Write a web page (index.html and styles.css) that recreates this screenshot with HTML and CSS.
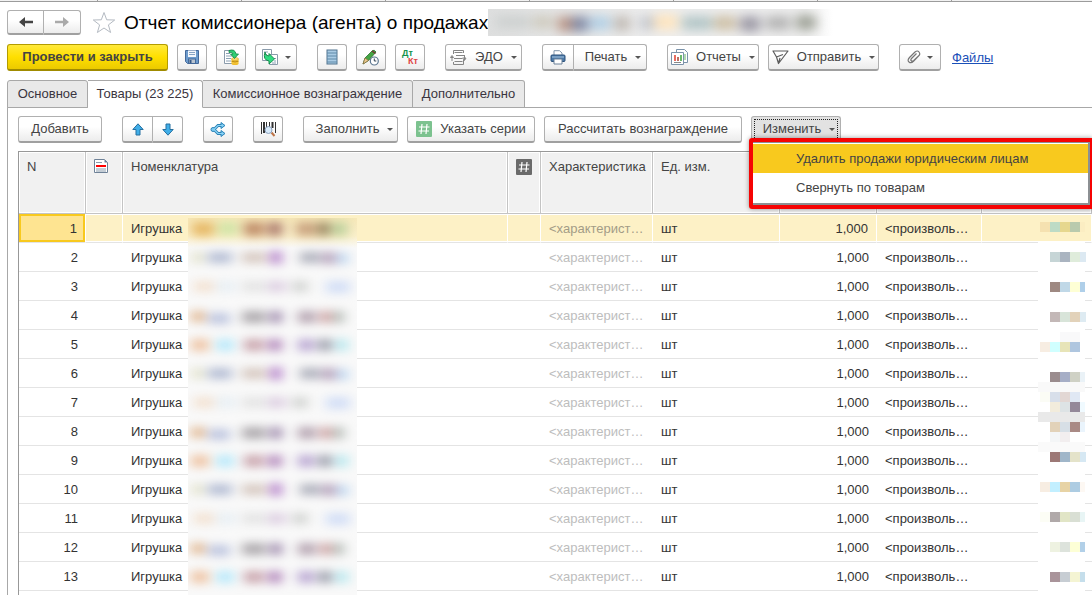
FILE: index.html
```html
<!DOCTYPE html>
<html lang="ru">
<head>
<meta charset="utf-8">
<meta name="viewport" content="width=device-width, initial-scale=1">
<title>Отчет комиссионера (агента) о продажах</title>
<link rel="stylesheet" href="styles.css">
</head>
<body>
<div class="window-tabs"><i></i><i></i><i></i><i></i><i></i><i></i><i></i></div>

<header class="title-row">
  <div class="group">
    <button class="btn nav" aria-label="Назад"><svg width="16" height="12" viewBox="0 0 16 12"><path d="M1 6L7 1v3.700h8v2.600H7V11z" fill="#444"/></svg></button><button class="btn nav" aria-label="Вперед"><svg width="16" height="12" viewBox="0 0 16 12"><path d="M15 6L9 1v3.700H1v2.600h8V11z" fill="#aaa"/></svg></button>
  </div>
  <svg class="star" width="24" height="23" viewBox="0 0 24 23"><path d="M12 1.500l2.700 7.300 8 .2-6.300 4.900 2.200 7.600L12 17l-6.600 4.500 2.200-7.600L1.300 9l8-.2z" fill="#fff" stroke="#b4bac2"/></svg>
  <h1>Отчет комиссионера (агента) о продажах</h1>
  <svg class="title-smear" width="345" height="27" viewBox="0 0 345 27" aria-hidden="true">
    <defs>
      <linearGradient id="fade" x1="0" x2="1"><stop offset="0" stop-color="#dedfdf"/><stop offset=".5" stop-color="#eee"/><stop offset=".92" stop-color="#eee"/><stop offset="1" stop-color="#fff"/></linearGradient>
      <filter id="soft" x="-10%" y="-100%" width="120%" height="300%" color-interpolation-filters="sRGB"><feGaussianBlur stdDeviation="6"/></filter>
    </defs>
    <rect width="345" height="27" fill="url(#fade)"/>
    <g filter="url(#soft)">
      <rect x="8" y="8" width="34" height="10" fill="#c8cccb"/><rect x="45" y="8" width="20" height="10" fill="#c9c4b4"/><rect x="70" y="8" width="14" height="14" fill="#b58d7c"/><rect x="84" y="8" width="16" height="14" fill="#77819f"/><rect x="102" y="8" width="20" height="12" fill="#a9cbe4"/><rect x="126" y="8" width="16" height="13" fill="#bbb4ad"/><rect x="152" y="8" width="14" height="12" fill="#bcc0c8"/><rect x="166" y="6" width="24" height="14" fill="#ffe4bb"/><rect x="194" y="8" width="30" height="12" fill="#a9bfc0"/><rect x="226" y="8" width="22" height="12" fill="#c8b89a"/><rect x="252" y="8" width="20" height="14" fill="#94919e"/><rect x="278" y="8" width="24" height="12" fill="#aaa"/><rect x="308" y="7" width="20" height="13" fill="#95998d"/>
    </g>
  </svg>
</header>

<div class="toolbar main-tools">
  <button class="btn primary">Провести и закрыть</button>
  <button class="btn icon" aria-label="Записать"><svg width="16" height="16" viewBox="0 0 16 16"><path d="M1.500 1.500h13v13h-11l-2-2z" fill="#6e9ccd" stroke="#44699a"/><rect x="4" y="1.500" width="8" height="6.500" fill="#f5f8fc"/><path d="M5 3.500h6M5 5.500h6" stroke="#89a5c5"/><rect x="4.500" y="10" width="7" height="4.500" fill="#b9c4d0" stroke="#44699a"/><rect x="5.500" y="11" width="2" height="3" fill="#365885"/></svg></button>
  <button class="btn icon" aria-label="Провести"><svg width="17" height="17" viewBox="0 0 17 17"><path d="M1.500 1.500h9v13h-9z" fill="#fff" stroke="#8a9bab"/><path d="M3 4.500h4M3 7h6M3 9.500h5M3 12h5" stroke="#8ba0b4"/><ellipse cx="12" cy="14.500" rx="3.500" ry="1.500" fill="#f0bc2c"/><path d="M8.500 10h7v4.500h-7z" fill="#f6c83c"/><path d="M8.500 12.200q3.500 1.500 7 0" stroke="#bb8a12" fill="none"/><ellipse cx="12" cy="10" rx="3.500" ry="1.400" fill="#ffe27a" stroke="#cf9c20" stroke-width=".6"/><path d="M6 1.500q6-2 7 3.500h2.500l-4 4.500-4-4.500H10Q9.500 2.500 6 3.500z" fill="#2fce72" stroke="#118545" stroke-width=".8"/></svg></button>
  <button class="btn icon drop" aria-label="Создать на основании"><svg width="18" height="17" viewBox="0 0 18 17"><path d="M1.500.5h9v11h-9z" fill="#fff" stroke="#8a9bab"/><path d="M3 3h4M3 5.500h3M3 8h2" stroke="#8ba0b4"/><path d="M8.500 5.500h8v10h-8z" fill="#fff" stroke="#8a9bab"/><path d="M13 9.500h2M13 12h2M11 14h4" stroke="#8ba0b4"/><path d="M4 3q0 4 4 4V4.500l5.500 5.500L8 15v-3Q1.500 11 4 3z" fill="#2fdb80" stroke="#118545" stroke-width=".9"/></svg><b class="caret"></b></button>
  <span class="sep"></span>
  <button class="btn icon" aria-label="Список"><svg width="12" height="16" viewBox="0 0 12 16"><rect x="1" y="1" width="10" height="14" fill="#a9cbe4" stroke="#52748f"/><path d="M1 4h10M1 7h10M1 10h10M1 13h10" stroke="#5e89a8"/></svg></button>
  <button class="btn icon" aria-label="Отложенное проведение"><svg width="18" height="17" viewBox="0 0 18 17"><path d="M1 15l2-6L10.500 1.500q2-1 3.500 1.500L6.500 11.500z" fill="#46a544" stroke="#2b7030" stroke-width=".8"/><path d="M1 15l2-6 3.500 2.500z" fill="#ecc88f" stroke="#8a6a3c" stroke-width=".7"/><path d="M10 2l3.500 2.500" stroke="#733" stroke-width="1.500"/><circle cx="12.300" cy="12" r="4" fill="#fff" stroke="#5b7690" stroke-width="1.200"/><path d="M12.300 9.500V12h2" stroke="#345" fill="none"/></svg></button>
  <button class="btn icon dtkt" aria-label="Дт Кт"><span class="dt">Дт</span><span class="kt">Кт</span></button>
  <span class="sep"></span>
  <button class="btn w-edo"><svg width="17" height="17" viewBox="0 0 17 17" fill="none" stroke="#858585"><path d="M3.500 5V1.500h10V4M3.500 13v2.500h10V11M4.500 3.500h8M6 6.500h8M4 9.500h8M4.500 12.500h8"/><path d="M14.500 6v5M12.500 9h3.500l-1.500 2.500zM2 12V7M.5 8.500h3L2 6.500z"/></svg>ЭДО<b class="caret"></b></button>
  <span class="sep"></span>
  <div class="group">
    <button class="btn w-print-icon" aria-label="Печать сразу"><svg width="16" height="15" viewBox="0 0 16 15"><path d="M4 5V.7h5.500L12 3v2" fill="#fff" stroke="#8195aa"/><rect x="1" y="5" width="14" height="6.500" rx="1" fill="#4c7aa8" stroke="#2b507a"/><path d="M2 7h12" stroke="#a7c5e0"/><path d="M4 9h8v5H4z" fill="#fff" stroke="#6a8098"/></svg></button><button class="btn w-print">Печать<b class="caret"></b></button>
  </div>
  <span class="sep"></span>
  <button class="btn w-reports"><svg width="17" height="17" viewBox="0 0 17 17"><path d="M5.500 3V.5h8l3 3v10H13" fill="#fff" stroke="#7b93aa"/><path d="M.5 3.500h12v12H.5z" fill="#fff" stroke="#7b93aa"/><path d="M3 13.500h7" stroke="#888"/><path d="M4 6v6" stroke="#e03c2e" stroke-width="1.500"/><path d="M7 8v4" stroke="#a83c2e" stroke-width="1.500"/><path d="M10 6v6" stroke="#3ba33b" stroke-width="1.500"/><path d="M14 5v6" stroke="#62b462"/></svg>Отчеты<b class="caret"></b></button>
  <button class="btn w-send"><svg width="17" height="15" viewBox="0 0 17 15" fill="none" stroke="#5c5c5c" stroke-width="1.200" stroke-linejoin="round"><path d="M1 1h15L6.500 13.500 4.500 7zM4.500 7L11 4.500M6.500 13.500L8 8"/></svg>Отправить<b class="caret"></b></button>
  <span class="sep"></span>
  <button class="btn icon drop" aria-label="Присоединенные файлы"><svg width="14" height="14" viewBox="0 0 14 14" fill="none" stroke="#757575" stroke-width="1.200"><path d="M11.500 6L6.500 11.300Q4 13.700 2 12T2.500 7.500L8 2q2.500-2 4 0t0 3.500L6.800 10.500q-1.500 1.200-2.500.3t.2-2.300L9.500 3.500"/></svg><b class="caret"></b></button>
  <a class="files" href="#">Файлы</a>
</div>

<nav class="tabs">
  <button class="tab w-t1">Основное</button>
  <button class="tab active w-t2">Товары (23 225)</button>
  <button class="tab w-t3">Комиссионное вознаграждение</button>
  <button class="tab w-t4">Дополнительно</button>
</nav>

<main class="panel">
  <div class="toolbar">
    <button class="btn w-add">Добавить</button>
    <span class="sep"></span>
    <div class="group">
      <button class="btn icon" aria-label="Вверх"><svg width="12" height="13" viewBox="0 0 12 13"><path d="M6 .8l5.200 5.700H8V12H4V6.500H.8z" fill="#40aee8" stroke="#256f9f"/></svg></button><button class="btn icon" aria-label="Вниз"><svg width="12" height="13" viewBox="0 0 12 13"><path d="M6 12.200L.8 6.500H4V1h4v5.500h3.200z" fill="#40aee8" stroke="#256f9f"/></svg></button>
    </div>
    <span class="sep"></span>
    <button class="btn icon" aria-label="Разбить строку"><svg width="16" height="15" viewBox="0 0 16 15"><path d="M4 7.500L8 3.500h5M4 7.500l4 4h5" fill="none" stroke="#2b82b6" stroke-width="3"/><path d="M11 .5l4 3-4 3zM11 8.500l4 3-4 3z" fill="#7acbf3" stroke="#2b82b6"/><circle cx="3" cy="7.500" r="2" fill="#7acbf3" stroke="#2b82b6"/><path d="M4 7.500L8 3.500h5M4 7.500l4 4h5" fill="none" stroke="#8bd4f6" stroke-width="1.200"/></svg></button>
    <span class="sep"></span>
    <button class="btn icon" aria-label="Поиск по штрихкоду"><svg width="17" height="16" viewBox="0 0 17 16"><path d="M1.500 1v12M6.500 1v7M9.500 1v5M15.500 1v11" stroke="#333"/><path d="M4 1v11M12.500 1v6" stroke="#333" stroke-width="2"/><path d="M11.500 11.500l3 3.500" stroke="#bd7548" stroke-width="2"/><circle cx="8.500" cy="9" r="3.500" fill="#d7eafa" stroke="#8ba0bd"/></svg></button>
    <span class="sep"></span>
    <button class="btn w-fill">Заполнить<b class="caret"></b></button>
    <button class="btn w-series"><svg width="16" height="16" viewBox="0 0 16 16"><rect width="16" height="16" rx="1" fill="#7cc28f"/><path d="M6 3L5 13M11 3l-1 10M3 6h10.500M2.500 10H13" stroke="#fff" stroke-width="1.200"/></svg>Указать серии</button>
    <button class="btn w-calc">Рассчитать вознаграждение</button>
    <div class="menu-anchor">
      <button class="btn pressed">Изменить<b class="caret"></b></button>
      <div class="callout">
        <div class="menu" role="menu">
          <button class="menu-item selected" role="menuitem">Удалить продажи юридическим лицам</button>
          <button class="menu-item" role="menuitem">Свернуть по товарам</button>
        </div>
      </div>
    </div>
  </div>

  <div class="grid">
    <table>
      <colgroup><col class="c-n"><col class="c-doc"><col class="c-name"><col class="c-hash"><col class="c-char"><col class="c-unit"><col class="c-qty"><col class="c-price"><col></colgroup>
      <thead><tr>
        <th>N</th>
        <th><svg width="14" height="14" viewBox="0 0 14 14"><path d="M.5.500h10l3 3v10H.5z" fill="#fff" stroke="#6f8298"/><path d="M10.500.500v3h3z" fill="#6f8298"/><path d="M2 3.500h6M2 10h10M2 12h10" stroke="#8a9bab"/><path d="M2 7h10" stroke="#f00" stroke-width="2"/></svg></th>
        <th>Номенклатура</th>
        <th><svg width="16" height="16" viewBox="0 0 16 16"><rect width="16" height="16" rx="1" fill="#6a6a6a"/><path d="M6 3L5 13M11 3l-1 10M3 6h10.500M2.500 10H13" stroke="#fff" stroke-width="1.200"/></svg></th>
        <th>Характеристика</th><th>Ед. изм.</th><th></th><th></th><th></th>
      </tr></thead>
      <tbody>
        <tr class="current"><td>1</td><td></td><td>Игрушка</td><td></td><td>&lt;характерист…</td><td>шт</td><td>1,000</td><td>&lt;произволь…</td><td></td></tr>
        <tr><td>2</td><td></td><td>Игрушка</td><td></td><td>&lt;характерист…</td><td>шт</td><td>1,000</td><td>&lt;произволь…</td><td></td></tr>
        <tr><td>3</td><td></td><td>Игрушка</td><td></td><td>&lt;характерист…</td><td>шт</td><td>1,000</td><td>&lt;произволь…</td><td></td></tr>
        <tr><td>4</td><td></td><td>Игрушка</td><td></td><td>&lt;характерист…</td><td>шт</td><td>1,000</td><td>&lt;произволь…</td><td></td></tr>
        <tr><td>5</td><td></td><td>Игрушка</td><td></td><td>&lt;характерист…</td><td>шт</td><td>1,000</td><td>&lt;произволь…</td><td></td></tr>
        <tr><td>6</td><td></td><td>Игрушка</td><td></td><td>&lt;характерист…</td><td>шт</td><td>1,000</td><td>&lt;произволь…</td><td></td></tr>
        <tr><td>7</td><td></td><td>Игрушка</td><td></td><td>&lt;характерист…</td><td>шт</td><td>1,000</td><td>&lt;произволь…</td><td></td></tr>
        <tr><td>8</td><td></td><td>Игрушка</td><td></td><td>&lt;характерист…</td><td>шт</td><td>1,000</td><td>&lt;произволь…</td><td></td></tr>
        <tr><td>9</td><td></td><td>Игрушка</td><td></td><td>&lt;характерист…</td><td>шт</td><td>1,000</td><td>&lt;произволь…</td><td></td></tr>
        <tr><td>10</td><td></td><td>Игрушка</td><td></td><td>&lt;характерист…</td><td>шт</td><td>1,000</td><td>&lt;произволь…</td><td></td></tr>
        <tr><td>11</td><td></td><td>Игрушка</td><td></td><td>&lt;характерист…</td><td>шт</td><td>1,000</td><td>&lt;произволь…</td><td></td></tr>
        <tr><td>12</td><td></td><td>Игрушка</td><td></td><td>&lt;характерист…</td><td>шт</td><td>1,000</td><td>&lt;произволь…</td><td></td></tr>
        <tr><td>13</td><td></td><td>Игрушка</td><td></td><td>&lt;характерист…</td><td>шт</td><td>1,000</td><td>&lt;произволь…</td><td></td></tr>
      </tbody>
    </table>

    <svg class="name-smear" width="169" height="377" viewBox="0 0 169 377" aria-hidden="true">
      <defs>
        <filter id="blur" x="-10%" y="-10%" width="120%" height="120%" color-interpolation-filters="sRGB"><feGaussianBlur stdDeviation="6 5"/></filter>
        <linearGradient id="top" x1="0" x2="0" y1="0" y2="1"><stop offset="0" stop-color="#f7e8b9"/><stop offset=".6" stop-color="#fbf0cb"/><stop offset="1" stop-color="#f9f9f9"/></linearGradient>
        <g id="ra"><rect x="4" y="5" width="12" height="11" fill="#e2e2cc"/><rect x="20" y="5" width="24" height="11" fill="#b4bdd4"/><rect x="54" y="5" width="24" height="11" fill="#d6c8c0"/><rect x="82" y="4" width="12" height="13" fill="#b888cc"/><rect x="112" y="5" width="20" height="11" fill="#aeb0bc"/><rect x="134" y="5" width="14" height="12" fill="#b7a4bd"/><rect x="150" y="6" width="10" height="11" fill="#b9d4f0"/></g>
        <g id="rb"><rect x="6" y="5" width="20" height="11" fill="#f3e2d2"/><rect x="28" y="5" width="20" height="11" fill="#e8eff4"/><rect x="54" y="5" width="24" height="11" fill="#e4e4e4"/><rect x="80" y="5" width="18" height="11" fill="#ddcfe2"/><rect x="104" y="5" width="16" height="11" fill="#d2d4d2"/><rect x="138" y="5" width="24" height="12" fill="#d2def6"/></g>
        <g id="rc"><rect x="3" y="6" width="14" height="11" fill="#e2b994"/><rect x="20" y="8" width="22" height="11" fill="#bdc5df"/><rect x="54" y="6" width="24" height="12" fill="#aeaaae"/><rect x="82" y="6" width="12" height="12" fill="#a08cae"/><rect x="110" y="6" width="18" height="12" fill="#b5a4b1"/><rect x="132" y="6" width="12" height="12" fill="#cea4a4"/><rect x="146" y="6" width="10" height="12" fill="#b2bab5"/></g>
        <g id="rd"><rect x="3" y="5" width="18" height="12" fill="#eec4a4"/><rect x="28" y="5" width="18" height="12" fill="#b9e9fa"/><rect x="56" y="5" width="20" height="12" fill="#caa6ae"/><rect x="80" y="5" width="14" height="12" fill="#b48abd"/><rect x="110" y="5" width="16" height="12" fill="#b9a6d2"/><rect x="130" y="5" width="14" height="12" fill="#9da0ad"/><rect x="148" y="5" width="12" height="12" fill="#b5e7ee"/></g>
      </defs>
      <rect width="169" height="377" fill="#f9f9f9"/>
      <rect width="169" height="30" fill="url(#top)"/>
      <g filter="url(#blur)">
        <rect x="4" y="4" width="22" height="14" fill="#e6b866"/><rect x="30" y="4" width="20" height="13" fill="#cfe4a5"/><rect x="56" y="4" width="20" height="14" fill="#bf8c68"/><rect x="80" y="4" width="14" height="14" fill="#aa786b"/><rect x="108" y="4" width="20" height="14" fill="#c9a27e"/><rect x="130" y="4" width="12" height="14" fill="#96855f"/><rect x="145" y="4" width="14" height="14" fill="#b9cf9a"/>
        <use href="#ra" y="29"/><use href="#rb" y="58"/><use href="#rc" y="87"/><use href="#rd" y="116"/>
        <use href="#ra" y="145"/><use href="#rb" y="174"/><use href="#rc" y="203"/><use href="#rd" y="232"/>
        <use href="#ra" y="261"/><use href="#rb" y="290"/><use href="#rc" y="319"/><use href="#rd" y="348"/>
      </g>
    </svg>

    <svg class="mosaic" width="48" height="373" viewBox="0 0 48 373" shape-rendering="crispEdges" aria-hidden="true">
      <path d="M0 20h47v353H0z" fill="#fff"/>
      <g><path d="M2 0h10v10H2z" fill="#f5e1b0"/><path d="M12 0h10v10H12z" fill="#bddbc5"/><path d="M22 0h10v10H22z" fill="#e6d78e"/><path d="M32 0h10v10H32z" fill="#b9caad"/><path d="M42 0h5v10h-5z" fill="#fbedc2"/></g>
      <g><path d="M12 30h10v10H12z" fill="#c6d5d6"/><path d="M22 30h10v10H22z" fill="#aab4c0"/><path d="M32 30h10v10H32z" fill="#dfecdb"/><path d="M42 30h6v10h-6z" fill="#dce9f2"/></g>
      <g><path d="M12 60h10v10H12z" fill="#9e8982"/><path d="M22 60h10v10H22z" fill="#c0d8e7"/><path d="M32 60h10v10H32z" fill="#feffd5"/><path d="M42 60h5v10h-5z" fill="#afcfe9"/></g>
      <g><path d="M12 90h10v10H12z" fill="#c3b8b7"/><path d="M22 90h10v10H22z" fill="#d8e4d9"/><path d="M32 90h10v10H32z" fill="#e2d2ba"/><path d="M42 90h6v10h-6z" fill="#deebf2"/></g>
      <g><path d="M22 110h20v10H22z" fill="#f9f9fa"/><path d="M2 120h10v10H2z" fill="#f7ede2"/><path d="M12 120h10v10H12z" fill="#d0ffff"/><path d="M22 120h10v10H22z" fill="#e7e4b8"/><path d="M32 120h10v10H32z" fill="#afc6df"/></g>
      <g><path d="M12 150h10v10H12z" fill="#9a8c8e"/><path d="M22 150h10v10H22z" fill="#a6aec6"/><path d="M32 150h10v10H32z" fill="#cfd1c5"/><path d="M42 150h5v10h-5z" fill="#eaf2f7"/><path d="M0 160h47v10H0z" fill="#f9f9f9"/></g>
      <g><path d="M2 170h10v10H2z" fill="#fbfcf5"/><path d="M12 170h10v10H12z" fill="#d8dfea"/><path d="M22 170h10v10H22z" fill="#e2d7d4"/><path d="M32 170h10v10H32z" fill="#e0e8f4"/><path d="M12 180h10v10H12z" fill="#f2ecdc"/><path d="M22 180h10v10H22z" fill="#dde3e5"/><path d="M32 180h10v10H32z" fill="#948899"/><path d="M42 180h5v10h-5z" fill="#f0faff"/><path d="M0 190h47v10H0z" fill="#e9e9e9"/></g>
      <g><path d="M12 200h10v10H12z" fill="#e2d2b9"/><path d="M22 200h10v10H22z" fill="#d7dfe6"/><path d="M32 200h10v10H32z" fill="#a98a85"/><path d="M42 200h5v10h-5z" fill="#eaf4fc"/><path d="M12 210h10v10H12z" fill="#f4f6f7"/><path d="M22 210h10v10H22z" fill="#f2eeef"/><path d="M0 220h47v10H0z" fill="#fafafa"/></g>
      <g><path d="M12 230h10v10H12z" fill="#9c7876"/><path d="M22 230h10v10H22z" fill="#a0b6c9"/><path d="M32 230h10v10H32z" fill="#e4e3ca"/><path d="M42 230h6v10h-6z" fill="#d6e8f3"/></g>
      <g><path d="M2 260h10v10H2z" fill="#f7ede2"/><path d="M12 260h10v10H12z" fill="#c2efff"/><path d="M22 260h10v10H22z" fill="#e7d3a5"/><path d="M32 260h10v10H32z" fill="#adcce2"/><path d="M42 260h5v10h-5z" fill="#fdf8f3"/></g>
      <g><path d="M2 290h10v10H2z" fill="#fcfdf5"/><path d="M12 290h10v10H12z" fill="#b0a9a9"/><path d="M22 290h10v10H22z" fill="#e1e5c6"/><path d="M32 290h10v10H32z" fill="#d9dfd4"/><path d="M42 290h5v10h-5z" fill="#e8f5f5"/></g>
      <g><path d="M12 320h10v10H12z" fill="#eef2e1"/><path d="M22 320h10v10H22z" fill="#dde3dc"/><path d="M32 320h10v10H32z" fill="#fdffd6"/><path d="M42 320h5v10h-5z" fill="#b2d0e8"/></g>
      <g><path d="M12 350h10v10H12z" fill="#a9949a"/><path d="M22 350h10v10H22z" fill="#c7cdd3"/><path d="M32 350h10v10H32z" fill="#f4f4d3"/><path d="M42 350h5v10h-5z" fill="#c5deeb"/></g>
    </svg>
  </div>
</main>
</body>
</html>
```
FILE: styles.css
```css
* { box-sizing: border-box; }

body {
  margin: 0;
  height: 100vh;
  overflow: hidden;
  display: flex;
  flex-direction: column;
  background: #fff;
  color: #444;
  font: 13px/16px "Liberation Sans", Arial, sans-serif;
}

button { font: inherit; color: inherit; margin: 0; }

.window-tabs {
  flex: none;
  display: flex;
  height: 2px;
  background: #f2f2f2;
  border-bottom: 1px solid #9c9c9c;
}
.window-tabs i { width: 144px; border-right: 1px solid #9c9c9c; }
.window-tabs i:first-child { width: 98px; }
.window-tabs i:last-child { width: 134px; }

.title-row {
  flex: none;
  display: flex;
  align-items: center;
  height: 42px;
  padding: 0 0 1px 7px;
}
.title-row h1 {
  margin: 0;
  font-size: 19px;
  line-height: 24px;
  font-weight: 400;
  color: #000;
  white-space: nowrap;
}
.star { margin: 0 8px 0 11px; }
.title-smear { flex: none; }

.group { display: flex; flex: none; }
.group .btn + .btn { border-left: 0; border-radius: 0 3px 3px 0; }
.group .btn:first-child { border-radius: 3px 0 0 3px; }

.btn {
  flex: none;
  display: flex;
  align-items: center;
  justify-content: center;
  gap: 8px;
  height: 27px;
  padding: 0 6px;
  border: 1px solid #b0b0b0;
  border-bottom: 2px solid #a0a0a0;
  border-radius: 3px;
  background: linear-gradient(#fff 40%, #ececec);
  white-space: nowrap;
}
.btn svg { flex: none; }
.btn.nav { width: 37px; height: 25px; }
.btn.icon { width: 30px; }
.group .btn.icon:first-child { width: 31px; }
.btn.drop { width: 42px; gap: 6px; }
.btn.primary {
  width: 161px;
  font-weight: 700;
  background: linear-gradient(#ffe93b, #ffdf00 50%, #ebca00);
  border-color: #b39c00 #b39c00 #a08b00;
}
.btn.pressed {
  width: 90px;
  padding-left: 12px;
  background: #e2e2e2;
  outline: 1px dotted #222;
  outline-offset: -4px;
}
.btn.dtkt {
  flex-direction: column;
  gap: 0;
  font-size: 9px;
  line-height: 8px;
  font-weight: 700;
}
.dt { color: #12934c; align-self: flex-start; }
.kt { color: #e04545; align-self: flex-end; }

.caret {
  border: 3px solid transparent;
  border-top-color: #555;
  border-bottom: 0;
}

.w-edo { width: 77px; }
.w-print-icon { width: 32px; }
.w-print { width: 73px; padding-left: 12px; }
.w-reports { width: 92px; }
.w-send { width: 111px; }
.w-add { width: 84px; }
.w-fill { width: 95px; padding-left: 14px; }
.w-series { width: 128px; }
.w-calc { width: 198px; }

.toolbar {
  flex: none;
  display: flex;
  align-items: center;
  gap: 9px;
}
.sep { width: 2px; flex: none; }
.main-tools { padding-left: 7px; height: 27px; }
.files { color: #1a50b8; margin-left: 2px; }

.tabs {
  flex: none;
  display: flex;
  height: 28px;
  margin-top: 9px;
  padding-left: 7px;
  background: linear-gradient(#a8a8a8, #a8a8a8) 7px 100% / 100% 1px no-repeat;
}
.tab {
  height: 28px;
  padding: 0;
  border: 1px solid #a8a8a8;
  border-left-width: 0;
  border-radius: 0 3px 0 0;
  background: #e9e9e9;
  color: #3a3540;
  white-space: nowrap;
}
.tab:first-child { border-left-width: 1px; border-radius: 3px 3px 0 0; }
.tab.active { background: #fff; border-bottom-color: #fff; }
.w-t1 { width: 81px; }
.w-t2 { width: 115px; }
.w-t3 { width: 210px; }
.w-t4 { width: 112px; }

.panel {
  flex: 1;
  min-height: 0;
  display: flex;
  flex-direction: column;
  gap: 8px;
  margin-left: 7px;
  padding: 8px 0 0 10px;
  border-left: 1px solid #a8a8a8;
}

.menu-anchor { position: relative; }
.callout {
  position: absolute;
  z-index: 2;
  top: 22px;
  left: -2px;
  width: 345px;
  border: 4px solid #f60303;
  border-radius: 3px;
  box-shadow: 0 0 5px rgba(0, 0, 0, .4);
}
.menu {
  display: flex;
  flex-direction: column;
  padding: 1px 0;
  border: 1px solid #8c9093;
  border-width: 1px 2px 2px 0;
  background: #fff;
}
.menu-item {
  height: 29px;
  padding: 0 0 0 43px;
  border: 0;
  background: #fff;
  text-align: left;
  white-space: nowrap;
}
.menu-item.selected { background: #f8c91e; }

.grid {
  flex: 1;
  min-height: 0;
  position: relative;
  overflow: hidden;
  border: 1px solid #989898;
  border-width: 1px 0 0 1px;
}
table {
  width: 100%;
  table-layout: fixed;
  border-collapse: separate;
  border-spacing: 0;
}
.c-n { width: 67px; }
.c-doc { width: 37px; }
.c-name { width: 385px; }
.c-hash { width: 33px; }
.c-char { width: 112px; }
.c-unit { width: 127px; }
.c-qty { width: 97px; }
.c-price { width: 105px; }

th {
  height: 62px;
  padding: 7px 8px 0;
  border-right: 1px solid #c4c4c4;
  border-bottom: 1px solid #c4c4c4;
  background: #f1f1f1;
  box-shadow: inset 1px 1px #fff, inset -1px -1px #fff;
  font-weight: 400;
  text-align: left;
  vertical-align: top;
  white-space: nowrap;
}
th svg { display: block; }
td {
  height: 29px;
  padding: 2px 8px 0;
  border-bottom: 1px solid #e4e4e4;
  color: #333;
  white-space: nowrap;
}
td:nth-child(1), td:nth-child(7) { text-align: right; }
td:nth-child(5) { color: #bdbdbd; }
.current td {
  background: #fdf1c6;
  border-right: 1px solid #fff;
  box-shadow: inset 0 1px #fff, inset 0 -1px #fff;
}
.current td:first-child {
  background: #fee491;
  box-shadow: inset 0 0 0 2px #f8c91e;
}
.current td:nth-child(5) { color: #a39c86; }

.name-smear { position: absolute; left: 169px; top: 66px; }
.mosaic { position: absolute; right: 6px; top: 70px; }
```
